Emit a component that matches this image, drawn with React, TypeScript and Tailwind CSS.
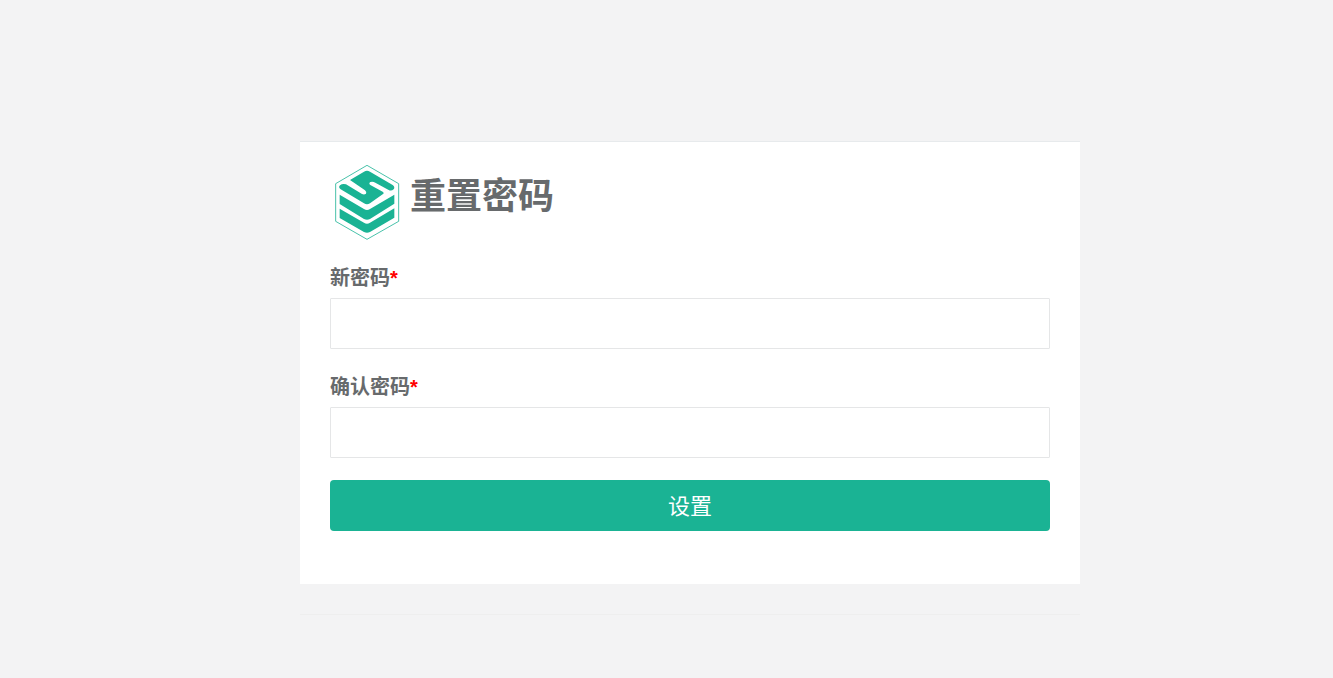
function Logo() {
  return (
    <svg viewBox="0 0 198 228" className="h-[76px] w-[66px] shrink-0" aria-hidden="true">
      <path d="M99 4 194 59V172L99 226 5 172V59Z" fill="none" stroke="#1ab394" strokeWidth="2.4" />
      <g fill="#1ab394">
        <path d="M48 48 90 23Q99 18 108 23L176 63Q184 69 179 76 172 82 164 78L124 56Q116 51 109 54 103 58 109 63L146 83Q152 87 146 91L108 118Q99 124 90 118L20 76Q12 70 18 64 25 58 36 61L84 90Q91 93 96 89 99 84 93 79Z" />
        <path d="M17 92 90 135Q99 141 108 135L181 92V119L108 165Q99 170 90 165L17 120Z" />
        <path d="M17 134 90 176Q99 182 108 176L181 133V161L108 204Q99 209 90 204L17 162Z" />
      </g>
    </svg>
  );
}

function PasswordField({ id, label }: { id: string; label: string }) {
  return (
    <div className="mb-[22px]">
      <label htmlFor={id} className="mb-1 block text-[20px] leading-8 font-bold">
        {label}
        <span className="text-[#ff0000]">*</span>
      </label>
      <input
        id={id}
        type="password"
        required
        className="block h-[51px] w-full rounded-[1px] border border-[#e5e6e7] bg-white px-3 text-lg outline-none focus:border-[#1ab394]"
      />
    </div>
  );
}

export default function App() {
  return (
    <div className="min-h-screen bg-[#f3f3f4] pt-[141px] pl-[47px] font-['Liberation_Sans','Noto_Sans_CJK_SC',sans-serif] text-[#676a6c]">
      <main className="mx-auto max-w-[780px]">
        <section className="border-t border-[#e7eaec] bg-white px-[30px] pt-[22px] pb-[53px]">
          <header className="mb-[22px] flex items-start gap-[10px] pl-1">
            <Logo />
            <h1 className="pt-[7px] text-[36px] leading-[52px] font-bold">重置密码</h1>
          </header>
          <form onSubmit={(event) => event.preventDefault()}>
            <PasswordField id="new-password" label="新密码" />
            <PasswordField id="confirm-password" label="确认密码" />
            <button type="submit" className="block h-[51px] w-full rounded bg-[#1ab394] pt-[2px] text-[22px] text-white">
              设置
            </button>
          </form>
        </section>
        <hr className="mt-[30px] border-[#eeeeee]" />
      </main>
    </div>
  );
}
